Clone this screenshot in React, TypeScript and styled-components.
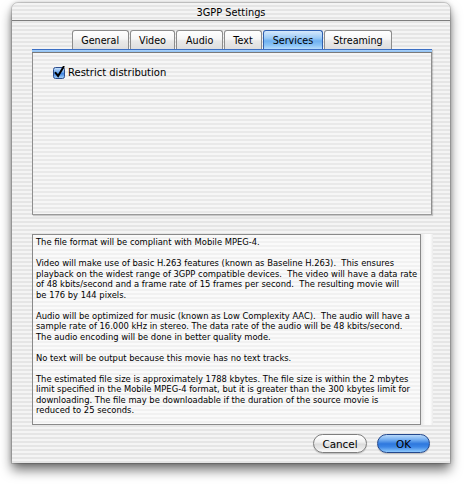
import React from "react";
import styled, { createGlobalStyle } from "styled-components";

const Global = createGlobalStyle`
  html, body { margin: 0; padding: 0; background: #ffffff; }
  body { font-family: "DejaVu Sans", "Liberation Sans", sans-serif; color: #000; }
`;

const pinstripe = `repeating-linear-gradient(180deg, #f4f4f4 0px, #f4f4f4 2px, #e5e5e5 2px, #e5e5e5 4px)`;

const Page = styled.div`
  width: 464px;
  height: 484px;
  box-sizing: border-box;
  padding: 3px 14px 0 12px;
  overflow: hidden;
`;

const Window = styled.div`
  width: 438px;
  height: 460px;
  box-sizing: border-box;
  display: flex;
  flex-direction: column;
  background: ${pinstripe};
  border-radius: 6px 6px 0 0;
  box-shadow: 0 7px 12px rgba(0, 0, 0, 0.55), 0 0 5px rgba(0, 0, 0, 0.25);
  outline: 1px solid rgba(0, 0, 0, 0.12);
`;

const TitleBar = styled.div`
  height: 16px;
  flex: none;
  display: flex;
  align-items: center;
  justify-content: center;
  border-bottom: 1px solid #7d7d7d;
  font-size: 9.8px;
  padding-top: 1px;
  box-sizing: content-box;
`;

const Content = styled.div`
  flex: 1;
  display: flex;
  flex-direction: column;
  padding: 9px 18px 0 20px;
`;

const TabRow = styled.div`
  height: 19px;
  display: flex;
  justify-content: center;
  align-items: flex-end;
  gap: 1px;
`;

const Tab = styled.div<{ $active?: boolean }>`
  height: 19px;
  box-sizing: border-box;
  padding: 0 8.5px;
  display: flex;
  align-items: center;
  font-size: 9.6px;
  border: 1px solid ${(p) => (p.$active ? "#2f5fae" : "#8c8c8c")};
  border-bottom: none;
  border-radius: 3px 3px 0 0;
  background: ${(p) =>
    p.$active
      ? "linear-gradient(180deg, #d6e9fc 0%, #9ccbf6 40%, #6eb0f0 55%, #8cc4f6 80%, #b7dcfb 100%)"
      : "linear-gradient(180deg, #ffffff 0%, #f6f6f6 45%, #e9e9e9 55%, #dedede 100%)"};
`;

const Panel = styled.div`
  height: 166px;
  box-sizing: border-box;
  display: flex;
  flex-direction: column;
  border-left: 1px solid #8f8f8f;
  border-right: 1px solid #8f8f8f;
  border-bottom: 1px solid #9a9a9a;
  box-shadow: 1px 1px 1px rgba(0, 0, 0, 0.18);
  background: repeating-linear-gradient(180deg, #f6f6f6 0px, #f6f6f6 2px, #e9e9e9 2px, #e9e9e9 4px);
`;

const PanelStrip = styled.div`
  height: 3px;
  margin: 0 -1px;
  flex: none;
  background: linear-gradient(180deg, #3c6fc4 0px, #3c6fc4 1px, #a9d1f8 1px, #8ec0f2 3px);
  border-bottom: 1px solid #7a7a7a;
`;

const PanelBody = styled.div`
  padding: 13px 0 0 20px;
`;

const CheckRow = styled.label`
  display: flex;
  align-items: center;
  gap: 3px;
  font-size: 10px;
  height: 13px;
`;

const TextBox = styled.div`
  margin-top: 19px;
  height: 191px;
  display: flex;
`;

const TextArea = styled.div`
  flex: 1;
  box-sizing: border-box;
  border: 1px solid #8a8a8a;
  padding: 2px 3px;
  font-size: 8.4px;
  line-height: 10.5px;
  background: repeating-linear-gradient(180deg, #fafafa 0px, #fafafa 2px, #f1f1f1 2px, #f1f1f1 4px);
`;

const Line = styled.div`
  white-space: pre;
  height: 10.5px;
`;

const ScrollTrack = styled.div`
  width: 12px;
  flex: none;
  background: linear-gradient(90deg, #e6e6e6 0%, #fbfbfb 35%, #fdfdfd 75%, #ececec 100%);
`;

const ButtonRow = styled.div`
  margin-top: 9px;
  padding-right: 2px;
  display: flex;
  justify-content: flex-end;
  gap: 10px;
`;

const Button = styled.div<{ $primary?: boolean }>`
  width: ${(p) => (p.$primary ? "53px" : "54px")};
  height: 19px;
  box-sizing: border-box;
  border-radius: 10px;
  display: flex;
  align-items: center;
  justify-content: center;
  font-size: 10.4px;
  border: 1px solid ${(p) => (p.$primary ? "#24488c" : "#7e7e7e")};
  background: ${(p) =>
    p.$primary
      ? "linear-gradient(180deg, #b9dafb 0%, #6eaaf0 30%, #2e78de 52%, #3c86e6 70%, #8fcafd 100%)"
      : "linear-gradient(180deg, #ffffff 0%, #f2f2f2 40%, #dcdcdc 55%, #eaeaea 80%, #fbfbfb 100%)"};
  box-shadow: 0 1px 1px rgba(0, 0, 0, 0.18);
`;

const Checkbox = () => (
  <svg width="12" height="13" viewBox="0 0 12 13">
    <defs>
      <linearGradient id="cbg" x1="0" y1="0" x2="0" y2="1">
        <stop offset="0" stopColor="#cfe5fc" />
        <stop offset="0.45" stopColor="#6aa6ec" />
        <stop offset="0.55" stopColor="#3f84e0" />
        <stop offset="1" stopColor="#a8d6fd" />
      </linearGradient>
    </defs>
    <rect x="0.5" y="1.5" width="11" height="11" rx="2" fill="url(#cbg)" stroke="#2c4d8d" />
    <path d="M2.6 6.8 L5.1 10 L10.6 0.8" stroke="#000" strokeWidth="2" fill="none" strokeLinecap="round" />
  </svg>
);

const tabs = ["General", "Video", "Audio", "Text", "Services", "Streaming"];

const lines = [
  "The file format will be compliant with Mobile MPEG-4.",
  "",
  "Video will make use of basic H.263 features (known as Baseline H.263).  This ensures",
  "playback on the widest range of 3GPP compatible devices.  The video will have a data rate",
  "of 48 kbits/second and a frame rate of 15 frames per second.  The resulting movie will",
  "be 176 by 144 pixels.",
  "",
  "Audio will be optimized for music (known as Low Complexity AAC).  The audio will have a",
  "sample rate of 16.000 kHz in stereo. The data rate of the audio will be 48 kbits/second.",
  "The audio encoding will be done in better quality mode.",
  "",
  "No text will be output because this movie has no text tracks.",
  "",
  "The estimated file size is approximately 1788 kbytes. The file size is within the 2 mbytes",
  "limit specified in the Mobile MPEG-4 format, but it is greater than the 300 kbytes limit for",
  "downloading. The file may be downloadable if the duration of the source movie is",
  "reduced to 25 seconds.",
];

export default function App() {
  return (
    <>
      <Global />
      <Page>
        <Window>
          <TitleBar>3GPP Settings</TitleBar>
          <Content>
            <TabRow>
              {tabs.map((t) => (
                <Tab key={t} $active={t === "Services"}>
                  {t}
                </Tab>
              ))}
            </TabRow>
            <Panel>
              <PanelStrip />
              <PanelBody>
                <CheckRow>
                  <Checkbox />
                  Restrict distribution
                </CheckRow>
              </PanelBody>
            </Panel>
            <TextBox>
              <TextArea>
                {lines.map((l, i) => (
                  <Line key={i}>{l}</Line>
                ))}
              </TextArea>
              <ScrollTrack />
            </TextBox>
            <ButtonRow>
              <Button>Cancel</Button>
              <Button $primary>OK</Button>
            </ButtonRow>
          </Content>
        </Window>
      </Page>
    </>
  );
}
